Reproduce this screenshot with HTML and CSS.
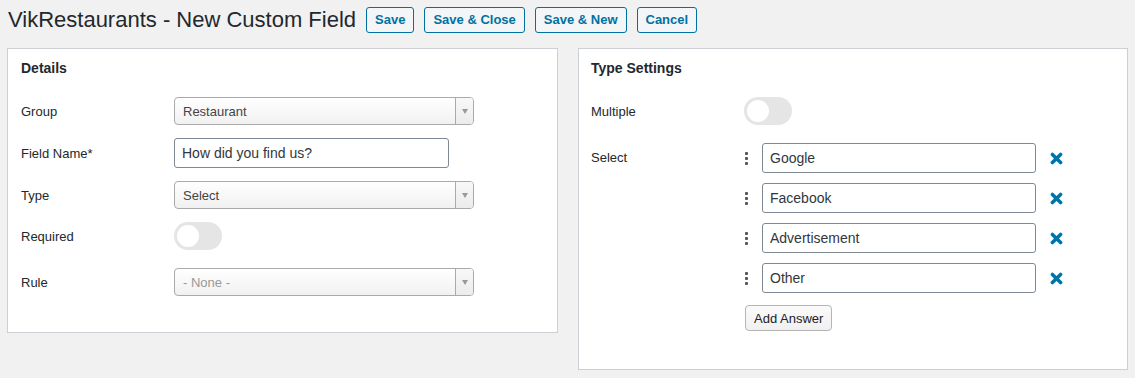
FILE: index.html
```html
<!DOCTYPE html>
<html>
<head>
<meta charset="utf-8">
<link rel="stylesheet" href="styles.css">
</head>
<body>
<div class="page">
  <div class="header">
    <h1 class="title">VikRestaurants - New Custom Field</h1>
    <div class="actions">
      <button class="btn">Save</button>
      <button class="btn">Save &amp; Close</button>
      <button class="btn">Save &amp; New</button>
      <button class="btn">Cancel</button>
    </div>
  </div>
  <div class="panels">
    <div class="panel panel-details">
      <h2 class="panel-title">Details</h2>
      <div class="row">
        <div class="label">Group</div>
        <div class="select"><span class="select-text">Restaurant</span><span class="select-arrow"><i></i></span></div>
      </div>
      <div class="row">
        <div class="label">Field Name*</div>
        <div class="input short">How did you find us?</div>
      </div>
      <div class="row">
        <div class="label">Type</div>
        <div class="select"><span class="select-text">Select</span><span class="select-arrow"><i></i></span></div>
      </div>
      <div class="row row-toggle">
        <div class="label">Required</div>
        <div class="toggle"><span class="knob"></span></div>
      </div>
      <div class="row">
        <div class="label">Rule</div>
        <div class="select muted"><span class="select-text">- None -</span><span class="select-arrow"><i></i></span></div>
      </div>
    </div>
    <div class="panel panel-type">
      <h2 class="panel-title">Type Settings</h2>
      <div class="row row-toggle">
        <div class="label">Multiple</div>
        <div class="toggle"><span class="knob"></span></div>
      </div>
      <div class="row row-top">
        <div class="label label-top">Select</div>
        <div class="answers">
          <div class="answer">
            <span class="handle"><i></i><i></i><i></i></span>
            <div class="input">Google</div>
            <svg class="remove" viewBox="0 0 14 14" width="13" height="13"><path d="M2.6 2.6 L11.4 11.4 M11.4 2.6 L2.6 11.4" stroke="#0073aa" stroke-width="3.8" stroke-linecap="round"/></svg>
          </div>
          <div class="answer">
            <span class="handle"><i></i><i></i><i></i></span>
            <div class="input">Facebook</div>
            <svg class="remove" viewBox="0 0 14 14" width="13" height="13"><path d="M2.6 2.6 L11.4 11.4 M11.4 2.6 L2.6 11.4" stroke="#0073aa" stroke-width="3.8" stroke-linecap="round"/></svg>
          </div>
          <div class="answer">
            <span class="handle"><i></i><i></i><i></i></span>
            <div class="input">Advertisement</div>
            <svg class="remove" viewBox="0 0 14 14" width="13" height="13"><path d="M2.6 2.6 L11.4 11.4 M11.4 2.6 L2.6 11.4" stroke="#0073aa" stroke-width="3.8" stroke-linecap="round"/></svg>
          </div>
          <div class="answer">
            <span class="handle"><i></i><i></i><i></i></span>
            <div class="input">Other</div>
            <svg class="remove" viewBox="0 0 14 14" width="13" height="13"><path d="M2.6 2.6 L11.4 11.4 M11.4 2.6 L2.6 11.4" stroke="#0073aa" stroke-width="3.8" stroke-linecap="round"/></svg>
          </div>
          <button class="btn-add">Add Answer</button>
        </div>
      </div>
    </div>
  </div>
</div>
</body>
</html>
```
FILE: styles.css
```css
* { box-sizing: border-box; }
html, body { margin: 0; padding: 0; background: #f1f1f1; }
body {
  font-family: "Liberation Sans", Arial, sans-serif;
  color: #23282d;
  font-size: 13px;
}
.page { padding: 0 8px 0 7px; }
.header {
  display: flex;
  align-items: center;
  height: 40px;
}
.title {
  margin: 0 0 0 1px;
  font-size: 22px;
  font-weight: 400;
  color: #23282d;
  line-height: 40px;
}
.actions { display: flex; gap: 10px; margin-left: 10px; }
.btn {
  font-family: inherit;
  font-size: 13px;
  font-weight: 700;
  color: #0071a1;
  background: #f3f5f6;
  border: 1px solid #0071a1;
  border-radius: 3px;
  height: 26px;
  padding: 0 8px;
  line-height: 24px;
  margin: 0;
}
.panels {
  display: grid;
  grid-template-columns: 551px 550px;
  column-gap: 20px;
  align-items: start;
  margin-top: 8px;
}
.panel {
  background: #fff;
  border: 1px solid #ccd0d4;
  padding: 9px 13px 0 13px;
}
.panel-details { padding-bottom: 36px; }
.panel-details .row { margin-bottom: 13px; }
.panel-details .row-toggle { margin-bottom: 18px; }
.panel-details .row:last-child { margin-bottom: 0; }
.panel-type { padding-bottom: 38px; padding-left: 12px; }
.panel-title {
  margin: 0 0 19px 0;
  font-size: 14px;
  font-weight: 700;
  line-height: 20px;
  color: #23282d;
}
.row {
  display: flex;
  align-items: center;
  margin-bottom: 14px;
}
.row:last-child { margin-bottom: 0; }
.row-toggle { margin-bottom: 18px; }
.row-top { align-items: flex-start; }
.label {
  width: 153px;
  flex: none;
  font-size: 13px;
  color: #23282d;
}
.label-top { padding-top: 7px; }
.select {
  width: 300px;
  height: 28px;
  border: 1px solid #aaa;
  border-radius: 4px;
  background: linear-gradient(#ffffff, #f1f1f1);
  display: flex;
  align-items: center;
  overflow: hidden;
}
.select-text {
  flex: 1;
  padding-left: 8px;
  font-size: 13px;
  color: #444;
}
.select.muted .select-text { color: #999; }
.select-arrow {
  width: 18px;
  height: 100%;
  border-left: 1px solid #aaa;
  background: linear-gradient(#f8f8f8, #ececec);
  display: flex;
  align-items: center;
  justify-content: center;
}
.select-arrow i {
  width: 0; height: 0;
  border-left: 3px solid transparent;
  border-right: 3px solid transparent;
  border-top: 5px solid #999;
}
.input {
  width: 274px;
  height: 30px;
  border: 1px solid #7e8993;
  border-radius: 3px;
  background: #fff;
  padding: 0 7px;
  font-size: 14px;
  line-height: 28px;
  color: #32373c;
}
.input.short { width: 275px; }
.toggle {
  width: 48px;
  height: 28px;
  border-radius: 14px;
  background: #e5e5e5;
  position: relative;
}
.knob {
  position: absolute;
  left: 3px;
  top: 3px;
  width: 22px;
  height: 22px;
  border-radius: 50%;
  background: #fff;
}
.answers { display: flex; flex-direction: column; gap: 10px; margin-left: -1px; }
.answer { display: flex; align-items: center; }
.handle {
  width: 19px;
  flex: none;
  display: flex;
  flex-direction: column;
  gap: 2px;
  padding-left: 2px;
}
.handle i {
  display: block;
  width: 3px;
  height: 3px;
  background: #555;
  border-radius: 1px;
}
.remove { margin-left: 14px; flex: none; }
.btn-add {
  align-self: flex-start;
  margin-top: 2px;
  margin-left: 2px;
  height: 26px;
  padding: 0 8px;
  font-family: inherit;
  font-size: 13px;
  color: #222;
  background: linear-gradient(#fafafa, #f0f0f0);
  border: 1px solid #b5b5b5;
  border-radius: 4px;
}
```
